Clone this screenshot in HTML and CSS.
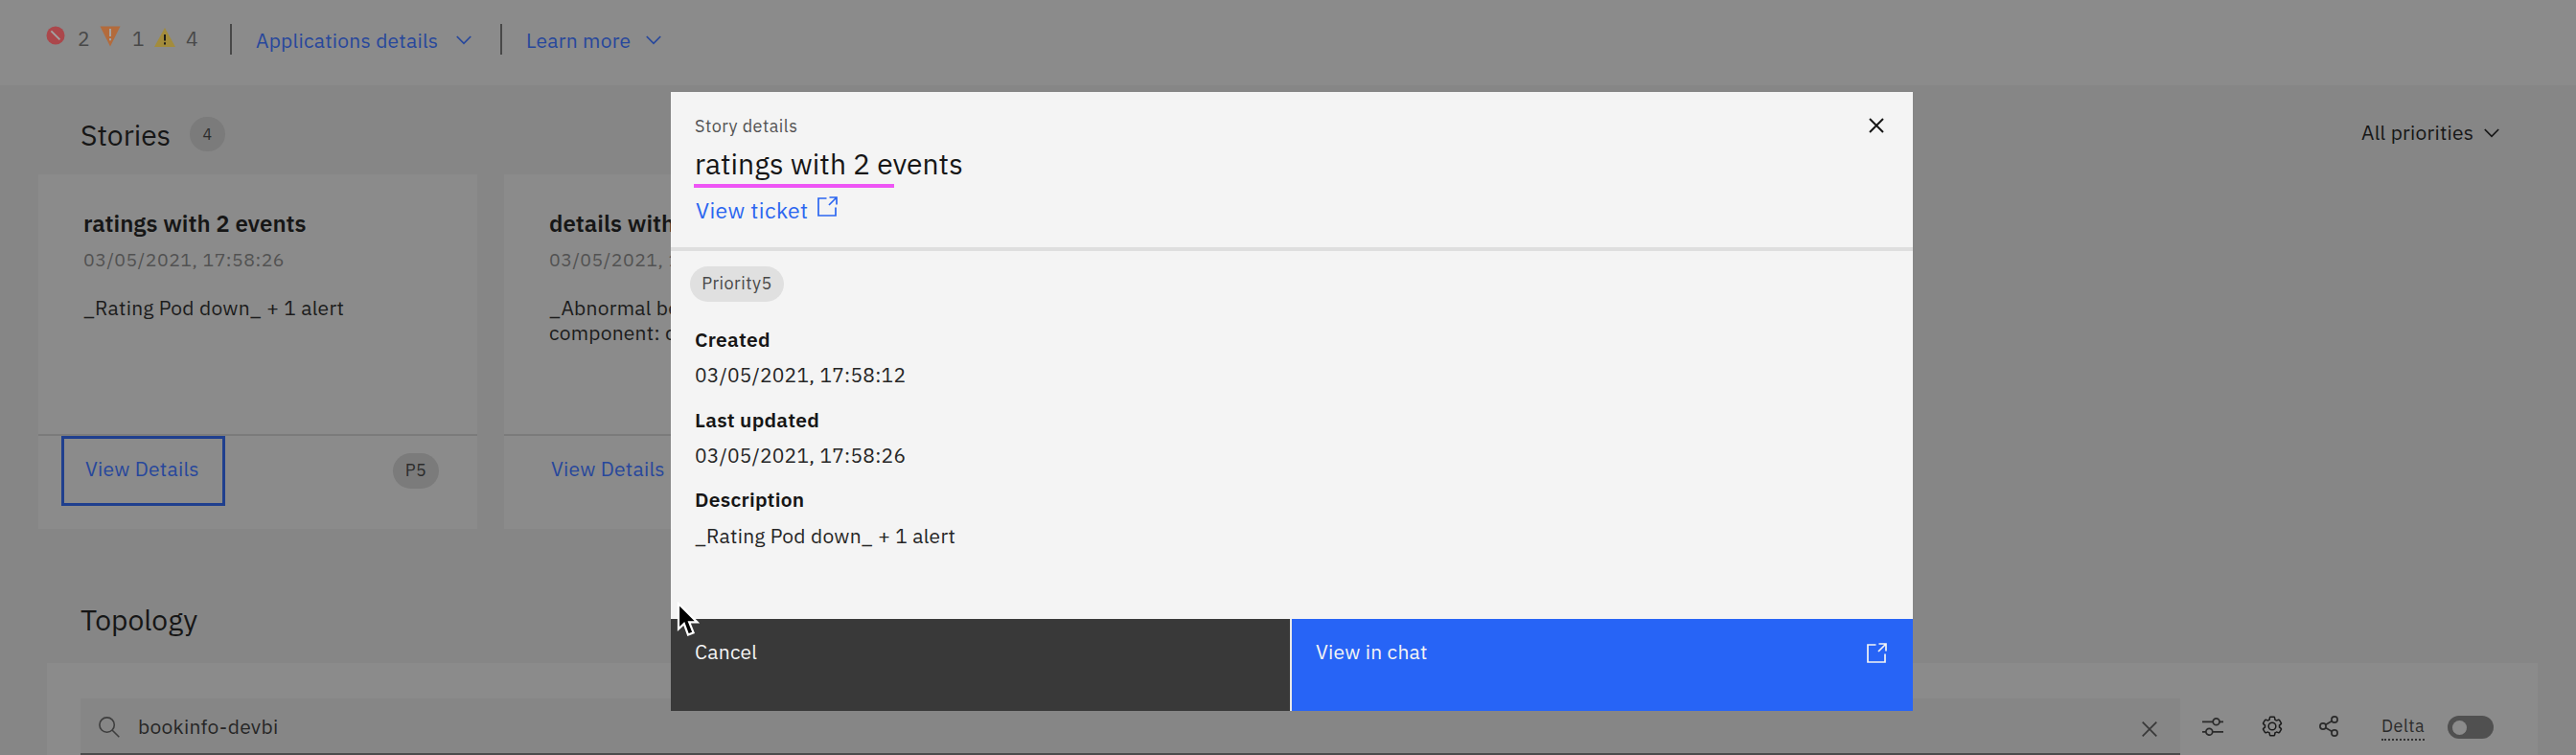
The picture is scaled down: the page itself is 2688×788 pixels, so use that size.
FILE: index.html
```html
<!DOCTYPE html>
<html lang="en">
<head>
<meta charset="utf-8">
<title>Stories</title>
<link rel="stylesheet" href="styles.css">
</head>
<body>
<header class="topbar">
  <svg class="ic-critical" viewBox="0 0 20 20"><circle cx="10" cy="10" r="9.5" fill="#ab474b"/><path d="M5.4 5.4L14.4 14.4" stroke="#a3a3a3" stroke-width="1.8"/></svg>
  <span class="t count c1">2</span>
  <svg class="ic-major" viewBox="0 0 22 22"><path d="M0.5 0.5H21.5L11 21.5z" fill="#b36b3c"/><path d="M11 3V11M11 13v2.3" stroke="#a3a3a3" stroke-width="2"/></svg>
  <span class="t count c2">1</span>
  <svg class="ic-minor" viewBox="0 0 22 20"><path d="M11 0L22 20H0z" fill="#a38c3c"/><path d="M11 7V13.5M11 15.2v2.2" stroke="#1c1c1c" stroke-width="2"/></svg>
  <span class="t count c3">4</span>
  <i class="bar b1"></i>
  <a class="t link l1">Applications details</a>
  <svg class="chev cv1" viewBox="0 0 16 10"><path d="M0.8 1L8 8.4L15.2 1"/></svg>
  <i class="bar b2"></i>
  <a class="t link l2">Learn more</a>
  <svg class="chev cv2" viewBox="0 0 16 10"><path d="M0.8 1L8 8.4L15.2 1"/></svg>
</header>

<section class="stories-head">
  <h1 class="t heading h-stories">Stories</h1>
  <span class="badge">4</span>
  <div class="filter">
    <span class="t filter-text">All priorities</span>
    <svg class="chev dark" viewBox="0 0 16 10"><path d="M0.8 1L8 8.4L15.2 1"/></svg>
  </div>
</section>

<section class="cards">
  <article class="card">
    <div class="card-body">
      <h2 class="t card-title">ratings with 2 events</h2>
      <p class="t card-date">03/05/2021, 17:58:26</p>
      <p class="t card-desc">_Rating Pod down_ + 1 alert</p>
    </div>
    <footer class="card-foot">
      <a class="details focused"><span class="t">View Details</span></a>
      <span class="pill p5">P5</span>
    </footer>
  </article>
  <article class="card">
    <div class="card-body">
      <h2 class="t card-title">details with</h2>
      <p class="t card-date">03/05/2021, 1</p>
      <p class="t card-desc">_Abnormal be<br>component: d</p>
    </div>
    <footer class="card-foot">
      <a class="details"><span class="t">View Details</span></a>
    </footer>
  </article>
</section>

<h1 class="heading h-topology">Topology</h1>
<section class="panel">
  <div class="search">
    <svg class="ic-search" viewBox="0 0 22 22"><circle cx="8.6" cy="8.6" r="7.7"/><path d="M14 14L21.3 21.3"/></svg>
    <span class="t search-text">bookinfo-devbi</span>
    <svg class="ic-clear" viewBox="0 0 16 16"><path d="M0.7 0.7L15.3 15.3M15.3 0.7L0.7 15.3"/></svg>
  </div>
  <svg class="ic-sliders" viewBox="0 0 22 19"><path d="M0 4.3H11M18 4.3H22M0 14.8H4M11 14.8H22"/><circle cx="14.6" cy="4.3" r="3.4"/><circle cx="7.3" cy="14.8" r="3.4"/></svg>
  <svg class="ic-gear" viewBox="0 0 32 32"><path fill="#1b1b1b" d="M27 16.76V15.24l1.92-1.68A2 2 0 0 0 29.3 11L26.94 7a2 2 0 0 0-1.73-1 2 2 0 0 0-.64.1l-2.43.82a11.35 11.35 0 0 0-1.31-.75l-.51-2.52a2 2 0 0 0-2-1.61H13.64a2 2 0 0 0-2 1.61l-.51 2.52a11.48 11.48 0 0 0-1.32.75L7.43 6.06A2 2 0 0 0 6.79 6 2 2 0 0 0 5.06 7L2.7 11a2 2 0 0 0 .41 2.51L5 15.24v1.52L3.11 18.44A2 2 0 0 0 2.7 21L5.06 25a2 2 0 0 0 1.73 1 2 2 0 0 0 .64-.1l2.43-.82a11.35 11.35 0 0 0 1.31.75l.51 2.52a2 2 0 0 0 2 1.61h4.72a2 2 0 0 0 2-1.61l.51-2.52a11.48 11.48 0 0 0 1.32-.75l2.42.82a2 2 0 0 0 .64.1 2 2 0 0 0 1.73-1L29.3 21a2 2 0 0 0-.41-2.51ZM25.21 24l-3.43-1.16a8.86 8.86 0 0 1-2.71 1.57L18.36 28H13.64l-.71-3.55a9.36 9.36 0 0 1-2.7-1.57L6.79 24 4.43 20l2.72-2.4a8.9 8.9 0 0 1 0-3.13L4.43 12 6.79 8l3.43 1.16a8.86 8.86 0 0 1 2.71-1.57L13.64 4h4.72l.71 3.55a9.36 9.36 0 0 1 2.7 1.57L25.21 8 27.57 12l-2.72 2.4a8.9 8.9 0 0 1 0 3.13L27.57 20Z"/><circle cx="16" cy="16" r="5.1" fill="none" stroke="#1b1b1b" stroke-width="2"/></svg>
  <svg class="ic-share" viewBox="0 0 20 22"><path d="M7 9.3L13.4 5.6M7 12.7L13.4 16.4"/><circle cx="4" cy="11" r="3.1"/><circle cx="16" cy="4" r="3.1"/><circle cx="16" cy="18" r="3.1"/></svg>
  <span class="delta">Delta</span>
  <span class="toggle"><i></i></span>
</section>

<div class="modal">
  <div class="modal-head">
    <div class="modal-title">
      <p class="t label">Story details</p>
      <h2 class="t title">ratings with 2 events</h2>
      <i class="marker"></i>
      <a class="ticket"><span class="t">View ticket</span>
        <svg class="launch" viewBox="0 0 21 21"><path d="M9.5 2H1V20H19V11.5M12.5 1H20V8.5M20 1L12 9"/></svg>
      </a>
    </div>
    <svg class="close" viewBox="0 0 16 16"><path d="M1 1L15 15M15 1L1 15"/></svg>
  </div>
  <div class="modal-body">
    <span class="pill priority">Priority5</span>
    <dl class="facts">
      <dt class="t">Created</dt>
      <dd class="t">03/05/2021, 17:58:12</dd>
      <dt class="t dt2">Last updated</dt>
      <dd class="t">03/05/2021, 17:58:26</dd>
      <dt class="t dt3">Description</dt>
      <dd class="t dd3">_Rating Pod down_ + 1 alert</dd>
    </dl>
  </div>
  <div class="modal-foot">
    <button class="btn cancel"><span class="t">Cancel</span></button>
    <button class="btn chat"><span class="t">View in chat</span>
      <svg class="launch" viewBox="0 0 21 21"><path d="M9.5 2H1V20H19V11.5M12.5 1H20V8.5M20 1L12 9"/></svg>
    </button>
  </div>
</div>
<svg class="cursor" viewBox="0 0 24 38"><path d="M2 2V28.5L7.8 23L12 34.5L17.6 32.3L13.2 21.4H21.5Z" fill="#000" stroke="#fff" stroke-width="2.2"/></svg>
</body>
</html>
```
FILE: styles.css
```css
* { box-sizing: border-box; margin: 0; padding: 0; }
body {
  width: 2688px; height: 788px; overflow: hidden; position: relative;
  background: #868686; color: #161616;
  font-family: "IBM Plex Sans", Roboto, "Liberation Sans", sans-serif;
  font-size: 21px; line-height: 28px; letter-spacing: 0.24px;
}
svg { display: block; flex: none; fill: none; }
.t { white-space: nowrap; display: block; }
a { color: #27479c; }
.topbar { height: 89px; background: #8b8b8b; display: flex; align-items: flex-start; padding-left: 48px; }
.ic-critical { width: 20px; height: 20px; margin-top: 27px; }
.ic-major { width: 22px; height: 22px; margin: 27px 0 0 11px; }
.ic-minor { width: 22px; height: 20px; margin: 29px 0 0 11px; }
.count { margin-top: 26px; margin-left: 13px; width: 12px; color: #484848; }
.c2 { margin-left: 12px; }
.c3 { margin-left: 11px; }
.bar { width: 2px; height: 32px; background: #484848; margin-top: 25px; }
.b1 { margin-left: 34px; }
.l1, .l2 { margin: 28px 0 0 25px; }
.l1 { width: 191px; }
.l2 { width: 109px; }
.chev { width: 16px; height: 10px; stroke: #27479c; stroke-width: 1.7; }
.cv1 { margin: 37px 0 0 18px; }
.b2 { margin-left: 30px; }
.cv2 { margin: 37px 0 0 16px; }

.stories-head { height: 93px; display: flex; align-items: flex-start; padding: 34px 80px 0 84px; }
.heading { font-size: 30px; line-height: 36px; font-weight: 400; letter-spacing: 0; }
.h-stories { width: 94px; }
.badge { width: 37px; height: 36px; margin: -1px 0 0 20px; border-radius: 18px; background: #7b7b7b; color: #2c2c2c; font-size: 16px; line-height: 36px; text-align: center; }
.filter { margin: 1px 0 0 auto; display: flex; align-items: flex-start; }
.filter-text { width: 117px; }
.filter .chev { stroke: #161616; margin: 10px 0 0 11px; }

.cards { display: flex; gap: 28px; padding-left: 40px; }
.card { width: 458px; height: 370px; background: #8b8b8b; }
.card-body { height: 271px; padding: 35px 0 0 47px; }
.card-title { font-size: 24px; line-height: 32px; font-weight: 600; letter-spacing: 0.03px; }
.card-date { margin-top: 8px; font-size: 19.5px; color: #525252; letter-spacing: 0.5px; }
.card-desc { margin-top: 23px; line-height: 26px; color: #1c1c1c; }
.card-foot { border-top: 2px solid #7b7b7b; height: 99px; display: flex; align-items: flex-start; padding: 0 40px 0 24px; }
.details { width: 171px; height: 73px; padding: 17px 0 0 22px; border: 3px solid transparent; }
.focused { border-color: #1f3f8e; }
.pill { border-radius: 19px; font-size: 18px; text-align: center; letter-spacing: 0.48px; }
.p5 { margin: 18px 0 0 auto; width: 48px; height: 37px; line-height: 36px; background: #7b7b7b; color: #2c2c2c; }

.h-topology { margin: 77px 0 27px 84px; width: 130px; }
.panel { margin-left: 49px; width: 2599px; height: 96px; background: #8b8b8b; padding: 37px 0 0 35px; display: flex; align-items: flex-start; }
.panel > svg { stroke: #2b2b2b; stroke-width: 1.7; }
.search { width: 2191px; height: 59px; background: #868686; border-bottom: 2px solid #4c4c4c; display: flex; align-items: flex-start; padding: 0 24px 0 19px; }
.ic-search { width: 22px; height: 22px; margin-top: 19px; stroke: #3e3e3e; stroke-width: 1.6; }
.search-text { margin: 15px 0 0 19px; color: #262626; letter-spacing: 0.28px; }
.ic-clear { width: 16px; height: 16px; margin: 24px 0 0 auto; stroke: #383838; stroke-width: 1.7; }
.ic-sliders { width: 22px; height: 19px; margin: 20px 0 0 23px; }
.panel > .ic-gear { width: 24px; height: 24px; margin: 17px 0 0 39px; stroke: none; }
.ic-share { width: 20px; height: 22px; margin: 18px 0 0 37px; }
.delta { font-size: 18px; letter-spacing: 0.48px; line-height: 24px; margin: 17px 0 0 45px; width: 45px; height: 27px; border-bottom: 2px dotted #333; color: #2b2b2b; }
.toggle { width: 48px; height: 24px; border-radius: 12px; background: #505050; margin: 18px 0 0 24px; padding: 5px; }
.toggle i { display: block; width: 15px; height: 15px; border-radius: 50%; background: #8b8b8b; }

.modal { position: absolute; left: 700px; top: 96px; width: 1296px; height: 646px; background: #f4f4f4; display: flex; flex-direction: column; }
.modal-head { height: 166px; display: flex; justify-content: space-between; align-items: flex-start; padding: 0 30px 0 25px; border-bottom: 4px solid #dedede; border-image: linear-gradient(to right, #f4f4f4 4px, #dedede 4px) 4; }
.label { margin-top: 24px; font-size: 18px; line-height: 24px; letter-spacing: 0.48px; color: #525252; }
.title { margin-top: 9px; font-size: 30px; line-height: 36px; font-weight: 400; letter-spacing: 0.03px; }
.marker { display: block; width: 209px; height: 4px; background: #ee55f5; margin: 3px 0 0 -1px; }
.ticket { display: flex; align-items: flex-start; color: #2b66f0; margin: 9px 0 0 1px; font-size: 23px; letter-spacing: 0.4px; }
.ticket .t { width: 118px; }
.launch { width: 21px; height: 21px; stroke: #2b66f0; stroke-width: 1.7; margin: 0 0 0 9px; }
.close { width: 16px; height: 16px; margin-top: 27px; stroke: #161616; stroke-width: 2; }
.modal-body { flex: 1; padding: 16px 0 0 25px; }
.priority { display: flex; justify-content: center; width: 98px; height: 37px; line-height: 36px; margin-left: -5px; background: #e0e0e0; color: #484848; }
.facts { margin-top: 25px; }
dt { font-weight: 600; }
dd { margin-top: 9px; color: #262626; }
.dt2 { margin-top: 19px; }
.dt3 { margin-top: 18px; }
.dd3 { margin-top: 10px; }
.modal-foot { height: 96px; display: flex; gap: 2px; background: #e8e8e8; }
.btn { border: 0; font: inherit; letter-spacing: inherit; color: #f4f4f4; display: flex; align-items: flex-start; justify-content: space-between; text-align: left; padding: 20px 27px 0 25px; }
.cancel { width: 646px; background: #393939; }
.chat { width: 648px; background: #2764f6; }
.chat .launch { stroke: #f4f4f4; margin-top: 5px; }
.cursor { position: absolute; left: 706px; top: 628px; width: 24px; height: 38px; }
```
